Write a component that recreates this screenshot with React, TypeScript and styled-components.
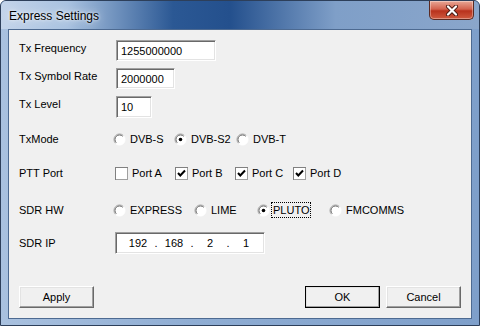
import styled, { createGlobalStyle } from 'styled-components';

const GlobalStyle = createGlobalStyle`
   html, body {
      margin: 0;
      padding: 0;
      background: #ffffff;
   }
   body {
      font-family: Tahoma, 'Liberation Sans', Arial, sans-serif;
      font-size: 11px;
      color: #000;
   }
`;

const Window = styled.div`
   box-sizing: border-box;
   width: 480px;
   height: 326px;
   display: flex;
   flex-direction: column;
   padding: 0 7px 6px 7px;
   border: 1px solid #2d3f5a;
   border-radius: 6px 6px 0 0;
   background-color: #8fadd3;
   background-image: linear-gradient(to right, #a9c1df, #8fadd3 40%, #7e9fca);
   overflow: hidden;
`;

// aero caption: pale at the left, deep blue in the middle, pale again at the right
const TitleBar = styled.div`
   position: relative;
   height: 28px;
   margin: 0 -7px;
   padding: 0 7px;
   display: flex;
   justify-content: space-between;
   align-items: flex-start;
   background-color: #3a66a0;
   background-image: linear-gradient(to right, #c3d4ea, #a9c2e0 14%, #2b5894 36%, #24508d 48%, #7f9fc8 70%, #8aa6cb);
`;

const Title = styled.span`
   font-family: 'Liberation Sans', Arial, sans-serif;
   font-size: 12px;
   line-height: 14px;
   margin-top: 8px;
   margin-left: 1px;
   color: #000;
   text-shadow: 0 0 8px rgba(255, 255, 255, 0.9), 0 0 3px rgba(255, 255, 255, 0.9);
`;

const CloseButton = styled.div`
   width: 45px;
   height: 19px;
   margin-right: -2px;
   display: flex;
   align-items: center;
   justify-content: center;
   border: 1px solid #5b2a22;
   border-top: none;
   border-radius: 0 0 5px 5px;
   box-sizing: border-box;
   background: linear-gradient(180deg, #e8a796 0%, #d3624e 45%, #b8321d 55%, #cf5a3f 100%);
   box-shadow: inset 0 0 0 1px rgba(255, 255, 255, 0.35);
`;

const Client = styled.div`
   flex: 1;
   display: flex;
   flex-direction: column;
   background: #f0f0f0;
   border: 1px solid #4d6a91;
   padding: 10px 10px 10px 10px;
`;

const Row = styled.div<{ $top: number; $height: number; $align?: string }>`
   display: flex;
   align-items: ${({ $align }) => $align || 'center'};
   margin-top: ${({ $top }) => $top}px;
   height: ${({ $height }) => $height}px;
`;

const Label = styled.span<{ $pad?: number }>`
   width: 97px;
   flex-shrink: 0;
   line-height: 14px;
   padding-top: ${({ $pad }) => $pad || 0}px;
`;

const TextBox = styled.div<{ $width: number }>`
   box-sizing: border-box;
   width: ${({ $width }) => $width}px;
   height: 100%;
   display: flex;
   align-items: center;
   padding-left: 4px;
   background: #fff;
   border-top: 1px solid #a0a0a0;
   border-left: 1px solid #a0a0a0;
   border-right: 1px solid #ffffff;
   border-bottom: 1px solid #ffffff;
   box-shadow: inset 1px 1px 0 #696969, inset -1px -1px 0 #e3e3e3;
`;

const IpBox = styled(TextBox)`
   margin-left: -1px;
   padding-left: 0;
`;

const IpPart = styled.span<{ $width: number }>`
   width: ${({ $width }) => $width}px;
   text-align: center;
`;

const IpLead = styled.span`
   width: 8px;
`;

const Options = styled.div<{ $shift: number }>`
   display: flex;
   align-items: center;
   margin-left: ${({ $shift }) => $shift}px;
`;

const Option = styled.div<{ $width?: number }>`
   display: flex;
   align-items: center;
   width: ${({ $width }) => ($width ? `${$width}px` : 'auto')};
   flex-shrink: 0;
`;

const OptionText = styled.span<{ $gap: number; $focus?: boolean }>`
   margin-left: ${({ $gap }) => $gap}px;
   line-height: 14px;
   padding: 0 1px;
   outline: ${({ $focus }) => ($focus ? '1px dotted #000' : 'none')};
   outline-offset: 0;
`;

const ButtonBar = styled.div`
   margin-top: auto;
   display: flex;
   align-items: center;
   gap: 6px;
`;

const Spacer = styled.div`
   flex: 1;
`;

const Button = styled.div<{ $default?: boolean }>`
   box-sizing: border-box;
   width: 75px;
   height: 22px;
   display: flex;
   align-items: center;
   justify-content: center;
   background: #f0f0f0;
   border-top: 1px solid #ffffff;
   border-left: 1px solid #ffffff;
   border-right: 1px solid #696969;
   border-bottom: 1px solid #696969;
   box-shadow: inset -1px -1px 0 #a0a0a0, inset 1px 1px 0 #e3e3e3;
   outline: ${({ $default }) => ($default ? '1px solid #000' : 'none')};
   outline-offset: ${({ $default }) => ($default ? '-1px' : '0')};
`;

function Radio({ checked }: { checked?: boolean }) {
   return (
      <svg width="13" height="13" viewBox="0 0 13 13">
         <circle cx="6.5" cy="6.5" r="5.5" fill="#fff" />
         <path d="M2.6 10.4 A5.5 5.5 0 0 1 10.4 2.6" fill="none" stroke="#a0a0a0" strokeWidth="1" />
         <path d="M3.3 9.7 A4.5 4.5 0 0 1 9.7 3.3" fill="none" stroke="#696969" strokeWidth="1" />
         <path d="M10.4 2.6 A5.5 5.5 0 0 1 2.6 10.4" fill="none" stroke="#ffffff" strokeWidth="1" />
         {checked && <circle cx="6.5" cy="6.5" r="1.8" fill="#000" />}
      </svg>
   );
}

function Check({ checked }: { checked?: boolean }) {
   return (
      <svg width="13" height="13" viewBox="0 0 13 13" shapeRendering="crispEdges">
         <rect x="0" y="0" width="13" height="13" fill="#fff" />
         <path d="M0.5 12.5 V0.5 H12.5" fill="none" stroke="#808080" />
         <path d="M12.5 0.5 V12.5 H0.5" fill="none" stroke="#a0a0a0" />
         {checked && (
            <path
               d="M3 6 L5.3 8.5 L10 3.5"
               fill="none"
               stroke="#000"
               strokeWidth="2"
               shapeRendering="geometricPrecision"
            />
         )}
      </svg>
   );
}

function RadioOption({
   label,
   width,
   checked,
   focus,
}: {
   label: string;
   width?: number;
   checked?: boolean;
   focus?: boolean;
}) {
   return (
      <Option $width={width}>
         <Radio checked={checked} />
         <OptionText $gap={focus ? 2 : 3} $focus={focus}>
            {label}
         </OptionText>
      </Option>
   );
}

function CheckOption({ label, width, checked }: { label: string; width?: number; checked?: boolean }) {
   return (
      <Option $width={width}>
         <Check checked={checked} />
         <OptionText $gap={3}>{label}</OptionText>
      </Option>
   );
}

export default function App() {
   return (
      <>
         <GlobalStyle />
         <Window>
            <TitleBar>
               <Title>Express Settings</Title>
               <CloseButton>
                  <svg width="14" height="11" viewBox="0 0 14 11">
                     <path d="M3 1.5 L11 9.5 M11 1.5 L3 9.5" stroke="#4a1a12" strokeWidth="4" strokeLinecap="round" />
                     <path d="M3 1.5 L11 9.5 M11 1.5 L3 9.5" stroke="#fff" strokeWidth="2.2" strokeLinecap="round" />
                  </svg>
               </CloseButton>
            </TitleBar>
            <Client>
               <Row $top={0} $height={21} $align="flex-start">
                  <Label $pad={1}>Tx Frequency</Label>
                  <TextBox $width={100}>1255000000</TextBox>
               </Row>
               <Row $top={7} $height={21} $align="flex-start">
                  <Label $pad={1}>Tx Symbol Rate</Label>
                  <TextBox $width={59}>2000000</TextBox>
               </Row>
               <Row $top={7} $height={22} $align="flex-start">
                  <Label $pad={1}>Tx Level</Label>
                  <TextBox $width={36}>10</TextBox>
               </Row>
               <Row $top={11} $height={20}>
                  <Label>TxMode</Label>
                  <Options $shift={-3}>
                     <RadioOption label="DVB-S" width={61} />
                     <RadioOption label="DVB-S2" width={62} checked />
                     <RadioOption label="DVB-T" />
                  </Options>
               </Row>
               <Row $top={14} $height={20}>
                  <Label>PTT Port</Label>
                  <Options $shift={-1}>
                     <CheckOption label="Port A" width={60} />
                     <CheckOption label="Port B" width={60} checked />
                     <CheckOption label="Port C" width={58} checked />
                     <CheckOption label="Port D" checked />
                  </Options>
               </Row>
               <Row $top={17} $height={20}>
                  <Label>SDR HW</Label>
                  <Options $shift={-3}>
                     <RadioOption label="EXPRESS" width={81} />
                     <RadioOption label="LIME" width={63} />
                     <RadioOption label="PLUTO" width={72} checked focus />
                     <RadioOption label="FMCOMMS" />
                  </Options>
               </Row>
               <Row $top={12} $height={22}>
                  <Label>SDR IP</Label>
                  <IpBox $width={150}>
                     <IpLead />
                     <IpPart $width={28}>192</IpPart>
                     <IpPart $width={8}>.</IpPart>
                     <IpPart $width={28}>168</IpPart>
                     <IpPart $width={8}>.</IpPart>
                     <IpPart $width={28}>2</IpPart>
                     <IpPart $width={8}>.</IpPart>
                     <IpPart $width={28}>1</IpPart>
                  </IpBox>
               </Row>
               <ButtonBar>
                  <Button>Apply</Button>
                  <Spacer />
                  <Button $default>OK</Button>
                  <Button>Cancel</Button>
               </ButtonBar>
            </Client>
         </Window>
      </>
   );
}
